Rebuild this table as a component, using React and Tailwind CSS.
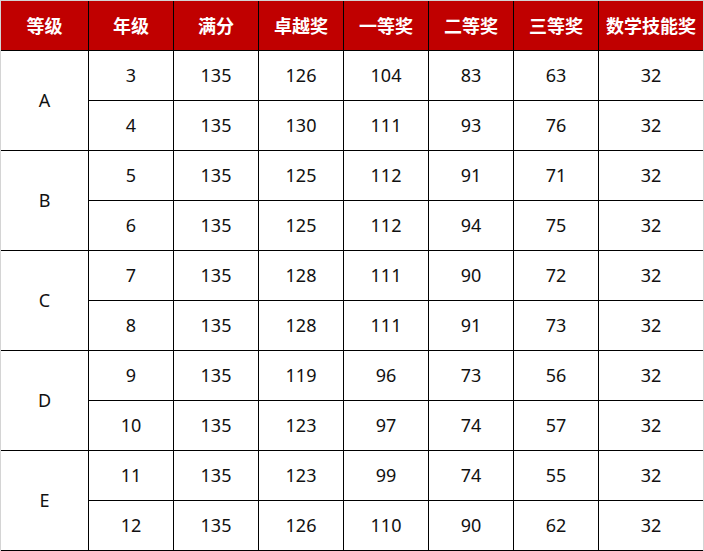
import React from 'react';

const headers = ['等级', '年级', '满分', '卓越奖', '一等奖', '二等奖', '三等奖', '数学技能奖'];

const groups = [
  { level: 'A', rows: [[3, 135, 126, 104, 83, 63, 32], [4, 135, 130, 111, 93, 76, 32]] },
  { level: 'B', rows: [[5, 135, 125, 112, 91, 71, 32], [6, 135, 125, 112, 94, 75, 32]] },
  { level: 'C', rows: [[7, 135, 128, 111, 90, 72, 32], [8, 135, 128, 111, 91, 73, 32]] },
  { level: 'D', rows: [[9, 135, 119, 96, 73, 56, 32], [10, 135, 123, 97, 74, 57, 32]] },
  { level: 'E', rows: [[11, 135, 123, 99, 74, 55, 32], [12, 135, 126, 110, 90, 62, 32]] },
];

const cell = 'flex items-center justify-center border-b border-black';

const App = () => {
  return (
    <div className="w-[704px] h-[551px] bg-white border-t border-l border-r border-[#d4d4d4] overflow-hidden">
      <div
        className="grid grid-cols-[88px_85px_85px_85px_85px_85px_85px_104px] grid-rows-[repeat(11,50px)] text-[18px] text-[#111]"
        style={{ fontFamily: '"Noto Sans", "Noto Sans CJK SC", sans-serif' }}
      >
        {headers.map((h, i) => (
          <div
            key={h}
            className={`${cell} bg-[#c00000] text-white font-bold ${i < 7 ? 'border-r' : ''}`}
            style={{ fontFamily: '"Noto Sans CJK SC", sans-serif' }}
          >
            {h}
          </div>
        ))}
        {groups.map((g) => (
          <React.Fragment key={g.level}>
            <div className={`${cell} border-r row-span-2`}>{g.level}</div>
            {g.rows[0].map((v, i) => (
              <div key={'a' + i} className={`${cell} ${i < 6 ? 'border-r' : ''}`}>{v}</div>
            ))}
            {g.rows[1].map((v, i) => (
              <div key={'b' + i} className={`${cell} ${i < 6 ? 'border-r' : ''}`}>{v}</div>
            ))}
          </React.Fragment>
        ))}
      </div>
    </div>
  );
};

export default App;
